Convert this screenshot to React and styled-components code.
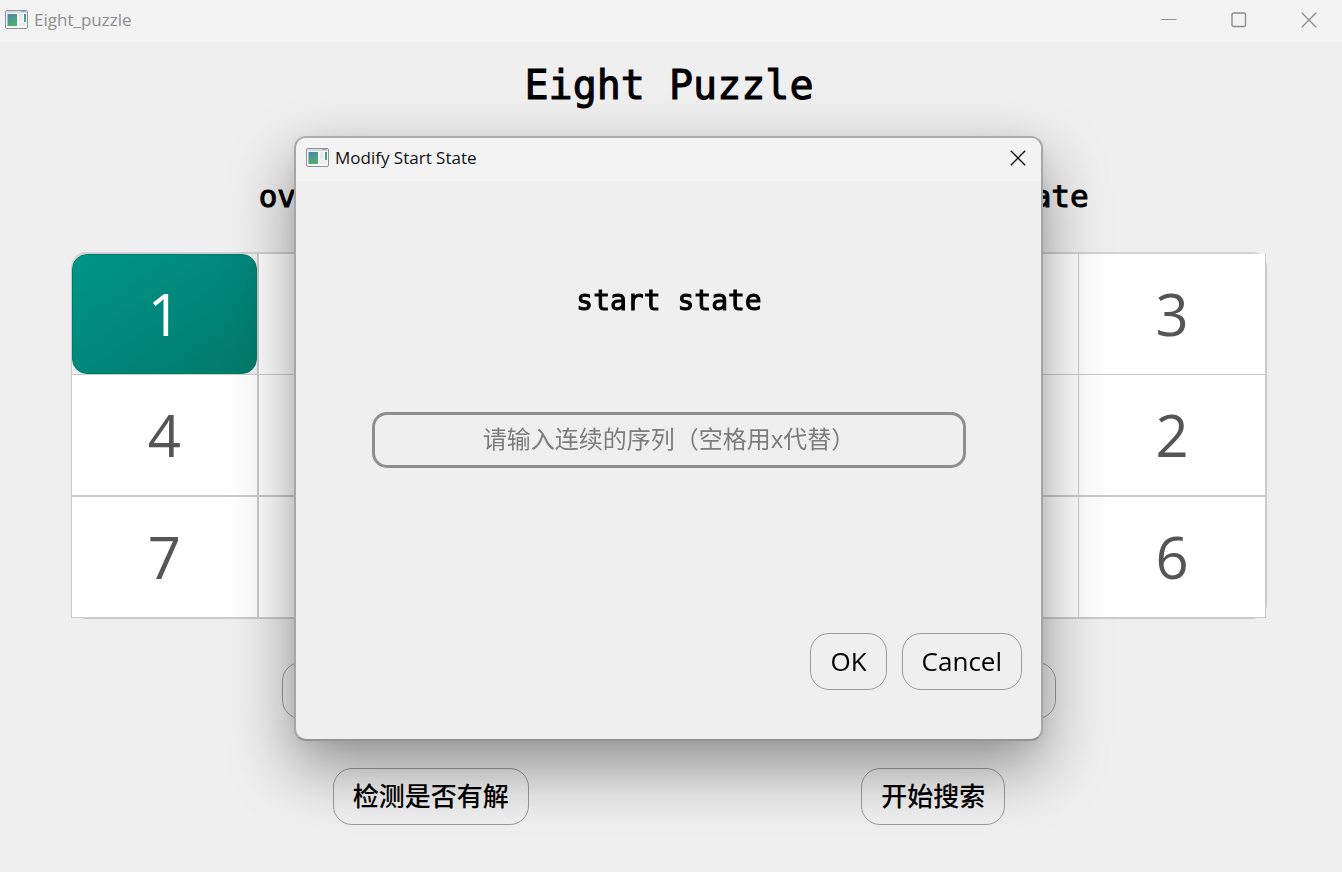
import React from "react";
import styled, { createGlobalStyle } from "styled-components";

const UI = '"Open Sans", "Noto Sans", "Noto Sans CJK SC", sans-serif';
const MONO = '"DejaVu Sans Mono", "Liberation Mono", monospace';

const GlobalStyle = createGlobalStyle`
  * { box-sizing: border-box; }
  body { margin: 0; background: #efefef; font-family: ${UI}; color: #000; }
  h1, h2 { margin: 0; }
`;

const Window = styled.div`
  display: flex;
  flex-direction: column;
  min-height: 100vh;
  background: #efefef;
`;

const TitleBar = styled.header`
  display: flex;
  align-items: center;
  gap: 6px;
  height: ${(p) => (p.$dialog ? 43 : 42)}px;
  padding: ${(p) => (p.$dialog ? "0 15px 3px 10px" : "0 25px 3px 5px")};
  background: #f3f3f3;
  color: ${(p) => (p.$dialog ? "#111" : "#8f8f8f")};
  font-size: 17px;
  border-radius: ${(p) => (p.$dialog ? "10px 10px 0 0" : "0")};
`;

const TitleText = styled.span`
  flex: 1;
  line-height: 24px;
  white-space: nowrap;
`;

const WindowControls = styled.div`
  display: flex;
  gap: 54px;
`;

const ControlButton = styled.button`
  display: flex;
  width: 16px;
  height: 16px;
  padding: 0;
  border: 0;
  background: none;
  color: inherit;
`;

const PageTitle = styled.h1`
  padding: 19px 4px 0 0;
  text-align: center;
  font: 400 40px/48px ${MONO};
  -webkit-text-stroke: 1px #000;
`;

const Boards = styled.main`
  display: grid;
  grid-template-columns: 1fr 1fr;
  gap: 72px;
  padding: 67px 75px 0 71px;
`;

const BoardColumn = styled.section`
  display: flex;
  flex-direction: column;
  align-items: center;
`;

const StateHeading = styled.h2`
  text-align: center;
  font: 400 ${(p) => (p.$small ? 28 : 31)}px/40px ${MONO};
  -webkit-text-stroke: 1px #000;
`;

const BoardFrame = styled.div`
  width: 100%;
  margin: 36px 0 43px;
  border: 1px solid #cbcbcb;
  border-top: 2px solid #d0d0d0;
  border-left-width: 0;
  border-radius: 15px;
`;

const BoardTable = styled.table`
  width: 100%;
  table-layout: fixed;
  border-collapse: separate;
  border-spacing: 0;
  border-left: 1px solid #cbcbcb;
  border-top-left-radius: 15px;
`;

const Cell = styled.td`
  height: 121px;
  padding: 0;
  background: ${(p) => (p.$selected ? "transparent" : "#fff")};
  border-right: 1px solid #cbcbcb;
  border-bottom: 1px solid #cbcbcb;
  text-align: center;
  color: #555;
  font-size: 58px;
  line-height: 80px;
  &:first-child { border-right-width: ${(p) => (p.$wide ? 2 : 1)}px; }
  tr:nth-child(2) > & { height: 122px; border-bottom-width: 2px; }
`;

const SelectedTile = styled.div`
  display: flex;
  align-items: center;
  justify-content: center;
  height: 120px;
  border: 1px solid #00796b;
  border-radius: 15px;
  background: linear-gradient(to bottom right, #009688, #00796b);
  color: #fff;
`;

const PillButton = styled.button`
  height: 57px;
  min-width: ${(p) => (p.$wide ? 140 : 0)}px;
  padding: 0 19px 2px;
  border: 1px solid #9a9a9a;
  border-radius: 19px;
  background: transparent;
  color: #000;
  font: ${(p) => (p.$cjk ? 500 : 400)} 26px/36px ${UI};
`;

const ActionRow = styled.footer`
  display: flex;
  justify-content: space-evenly;
  padding: 49px 4px 46px 0;
`;

const Overlay = styled.div`
  position: fixed;
  inset: 0;
  display: flex;
  align-items: flex-start;
  justify-content: center;
  padding: 136px 5px 0 0;
`;

const Dialog = styled.div`
  width: 100%;
  max-width: 749px;
  border: 2px solid;
  border-color: #adadad #a6a6a6 #949494;
  border-radius: 12px;
  background: #efefef;
  box-shadow: 0 26px 64px rgba(0, 0, 0, 0.4), 0 2px 16px rgba(0, 0, 0, 0.06);
`;

const DialogForm = styled.form`
  display: flex;
  flex-direction: column;
  padding: 100px 19px 49px 20px;
`;

const StateInput = styled.input`
  height: 56px;
  margin: 91px 56px 165px;
  padding: 0 20px 3px;
  border: 3px solid #8e8e8e;
  border-radius: 15px;
  background: transparent;
  text-align: center;
  font: 400 24px/36px ${UI};
  color: #333;
  outline: 0;
  &::placeholder { color: #7c7c7c; opacity: 1; }
`;

const DialogActions = styled.div`
  display: flex;
  justify-content: flex-end;
  gap: 15px;
`;

function AppIcon({ id }) {
  return (
    <svg width="23" height="20" viewBox="0 0 23 20" aria-hidden="true">
      <defs>
        <linearGradient id={id} x1="0" y1="0" x2="0.5" y2="1">
          <stop offset="0" stopColor="#4a7fb0" />
          <stop offset="1" stopColor="#52b06c" />
        </linearGradient>
      </defs>
      <rect x="0.5" y="0.5" width="22" height="18" rx="1.5" fill="#f7f7f8" stroke="#8c939b" />
      <rect x="1" y="1" width="21" height="2" fill="#d3dbe5" />
      <rect x="16" y="1" width="5" height="1" fill="#9fb0c4" />
      <rect x="2.5" y="4" width="9.5" height="12" fill={`url(#${id})`} />
      <rect x="14" y="4" width="3.5" height="7" fill="#e9e9e9" />
      <rect x="14" y="12.500" width="7" height="3.500" fill="#ececec" />
      <rect x="19" y="4" width="2" height="8" fill={`url(#${id})`} />
    </svg>
  );
}

const MinimizeGlyph = () => (
  <svg width="16" height="16" viewBox="0 0 16 16"><path d="M0.500 7.500H15.500" stroke="currentColor" /></svg>
);

const MaximizeGlyph = () => (
  <svg width="16" height="16" viewBox="0 0 16 16">
    <rect x="1" y="1" width="13.500" height="13.500" rx="1.500" fill="none" stroke="currentColor" strokeWidth="1.400" />
  </svg>
);

const CloseGlyph = () => (
  <svg width="16" height="16" viewBox="0 0 16 16">
    <path d="M0.800 0.800L15.200 15.200M15.200 0.800L0.800 15.200" stroke="currentColor" strokeWidth="1.400" />
  </svg>
);

function Board({ title, rows, selectFirst }) {
  return (
    <BoardColumn>
      <StateHeading>{title}</StateHeading>
      <BoardFrame>
        <BoardTable aria-label={title}>
          <tbody>
            {rows.map((row, r) => (
              <tr key={r}>
                {row.map((value, c) => {
                  const selected = selectFirst && r === 0 && c === 0;
                  return (
                    <Cell key={c} $selected={selected} $wide={selectFirst}>
                      {selected ? <SelectedTile>{value}</SelectedTile> : value}
                    </Cell>
                  );
                })}
              </tr>
            ))}
          </tbody>
        </BoardTable>
      </BoardFrame>
      <PillButton $wide aria-label={`Modify ${title}`} />
    </BoardColumn>
  );
}

const OVER_STATE = [[1, "", ""], [4, "", ""], [7, "", ""]];
const START_STATE = [["", "", 3], ["", "", 2], ["", "", 6]];

export default function App() {
  return (
    <>
      <GlobalStyle />
      <Window>
        <TitleBar>
          <AppIcon id="main-icon" />
          <TitleText>Eight_puzzle</TitleText>
          <WindowControls>
            <ControlButton aria-label="Minimize"><MinimizeGlyph /></ControlButton>
            <ControlButton aria-label="Maximize"><MaximizeGlyph /></ControlButton>
            <ControlButton aria-label="Close"><CloseGlyph /></ControlButton>
          </WindowControls>
        </TitleBar>
        <PageTitle>Eight Puzzle</PageTitle>
        <Boards>
          <Board title="over state" rows={OVER_STATE} selectFirst />
          <Board title="start state" rows={START_STATE} />
        </Boards>
        <ActionRow>
          <PillButton $cjk>检测是否有解</PillButton>
          <PillButton $cjk>开始搜索</PillButton>
        </ActionRow>
      </Window>
      <Overlay>
        <Dialog role="dialog" aria-modal="true" aria-labelledby="dialog-title">
          <TitleBar $dialog>
            <AppIcon id="dialog-icon" />
            <TitleText id="dialog-title">Modify Start State</TitleText>
            <ControlButton aria-label="Close dialog"><CloseGlyph /></ControlButton>
          </TitleBar>
          <DialogForm onSubmit={(e) => e.preventDefault()}>
            <StateHeading as="label" htmlFor="state-input" $small>start state</StateHeading>
            <StateInput id="state-input" type="text" placeholder="请输入连续的序列（空格用x代替）" />
            <DialogActions>
              <PillButton type="submit">OK</PillButton>
              <PillButton type="button">Cancel</PillButton>
            </DialogActions>
          </DialogForm>
        </Dialog>
      </Overlay>
    </>
  );
}
